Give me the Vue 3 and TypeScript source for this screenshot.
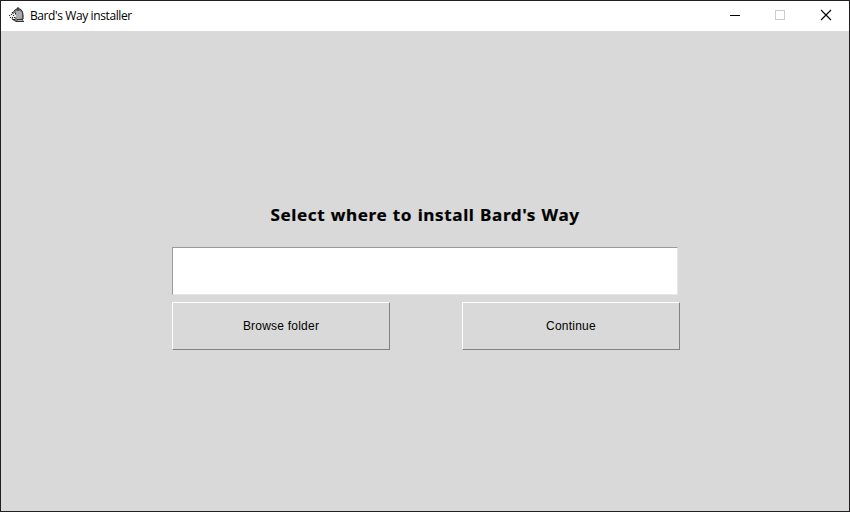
<script setup lang="ts">
import { ref } from 'vue'

const title = "Bard's Way installer"
const heading = "Select where to install Bard's Way"
const folder = ref<string>('')
</script>

<template>
  <div class="window">
    <header class="titlebar">
      <svg class="app-icon" width="16" height="16" viewBox="0 0 16 16">
        <path d="M4 5 6 2.5 8 1.5 9 0 10 1.5 12 2.5 14 5 14.5 9 14 13 15 15 8 15 5 13 3 12 1 9 2 6Z" fill="#777" />
        <path d="M7 4H11L13 6V11L11 12H8L7 10Z" fill="#aaa" />
        <path d="M4.5 4.5 6.5 2.5 9 1.5 12 2.5 13.5 5 14 9V12M9 0V4M3 12 7 14.5H15M8 12.5H14" fill="none" stroke="#333" />
        <path d="M1 6H3V7H5V6H6V8H7V10H6V12H4V11H2V10H1V8H0V7H1Z" fill="#eee" />
        <path d="M0 8.5H1M2 7.5H3M4 8.5H5M1 10.5H2M3 10.5H4M5 10.5H6M6 6.5H7M3 5.5H4M4 12.5H6" stroke="#222" />
        <path d="M9 13.5H13" stroke="#bbb" />
      </svg>
      <span class="title">{{ title }}</span>
      <div class="controls">
        <svg width="45" height="30" viewBox="0 0 45 30"><path d="M10 14.5H20" stroke="#000" /></svg>
        <svg width="45" height="30" viewBox="0 0 45 30"><rect x="10.5" y="9.5" width="9" height="9" fill="none" stroke="#ccc" /></svg>
        <svg width="39" height="30" viewBox="0 0 39 30"><path d="M11 9 21 19M21 9 11 19" stroke="#000" stroke-width="1.15" /></svg>
      </div>
    </header>
    <main class="content">
      <h1>{{ heading }}</h1>
      <input v-model="folder" class="path" type="text" />
      <div class="actions">
        <button type="button">Browse folder</button>
        <button type="button">Continue</button>
      </div>
    </main>
  </div>
</template>

<style>
body { margin: 0; }
</style>

<style scoped>
.window {
  box-sizing: border-box;
  width: 850px;
  height: 512px;
  border: 1px solid #231f20;
  background: #d9d9d9;
  display: flex;
  flex-direction: column;
  overflow: hidden;
  color: #000;
}
.titlebar {
  height: 30px;
  flex: none;
  background: #fff;
  display: flex;
  align-items: center;
  padding-left: 8px;
}
.app-icon { align-self: flex-start; margin-top: 6px; }
.title {
  margin-left: 5px;
  font: 12px/16px "Open Sans", "Noto Sans", sans-serif;
  letter-spacing: -0.4px;
  white-space: nowrap;
}
.controls { display: flex; margin-left: auto; }
.content {
  display: flex;
  flex-direction: column;
  padding: 172px 0 0 171px;
}
h1 {
  width: 506px;
  margin: 0;
  height: 24px;
  font: 700 16px/24px "Noto Sans", sans-serif;
  letter-spacing: 0.55px;
  word-spacing: 0.5px;
  transform: scaleX(1.07);
  -webkit-text-stroke: 0.2px #000;
  text-align: center;
  white-space: nowrap;
}
.path {
  box-sizing: border-box;
  width: 506px;
  height: 48px;
  margin: 20px 0 7px;
  padding: 0 4px;
  border: 1px solid;
  border-color: #999 #e6e6e6 #e6e6e6 #999;
  border-radius: 0;
  background: #fff;
  outline: none;
  font: 12px "Liberation Sans", sans-serif;
}
.actions { display: flex; gap: 72px; }
button {
  box-sizing: border-box;
  width: 218px;
  height: 48px;
  padding: 0 0 1px;
  border: 1px solid;
  border-color: #fff #828282 #828282 #fff;
  border-radius: 0;
  background: #d9d9d9;
  color: #000;
  font: 12px/16px "Liberation Sans", sans-serif;
  letter-spacing: 0.22px;
}
</style>
